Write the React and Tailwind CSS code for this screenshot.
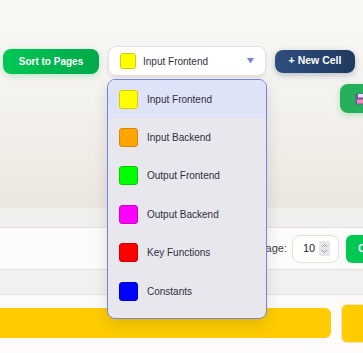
import React, { useState } from 'react';

const CELL_TYPES = [
  { id: 'input-frontend', label: 'Input Frontend', color: 'bg-[#ffff00]', border: 'border-[#d6cc00]' },
  { id: 'input-backend', label: 'Input Backend', color: 'bg-[#ffa500]', border: 'border-[#d48a00]' },
  { id: 'output-frontend', label: 'Output Frontend', color: 'bg-[#00ff00]', border: 'border-[#00cc00]' },
  { id: 'output-backend', label: 'Output Backend', color: 'bg-[#ff00ff]', border: 'border-[#cc00cc]' },
  { id: 'key-functions', label: 'Key Functions', color: 'bg-[#ff0000]', border: 'border-[#cc0000]' },
  { id: 'constants', label: 'Constants', color: 'bg-[#0000ff]', border: 'border-[#0000cc]' },
];

// ikon disket kecil untuk tombol simpan
const FloppyIcon = () => (
  <svg width="12" height="12" viewBox="0 0 12 12">
    <rect x="0.5" y="0.5" width="11" height="11" rx="1.5" fill="#7a4fa0" />
    <rect x="3" y="1" width="6" height="3.5" fill="#e8e0f0" />
    <rect x="2" y="6.5" width="8" height="4" fill="#f48fb1" />
  </svg>
);

const App = () => {
  const [selected, setSelected] = useState(CELL_TYPES[0]);
  const [open, setOpen] = useState(true);
  const [perPage, setPerPage] = useState(10);

  return (
    <div className="relative w-full h-[353px] overflow-hidden bg-[#fcfbfa] text-[#2f2f3a] font-['Liberation_Sans',Arial,sans-serif]">
      {/* --- Header --- */}
      <div className="h-[208px] bg-gradient-to-b from-[#f9f8f5] via-[#f4f2ee] to-[#ebe6df] pt-[46px]">
        <div className="flex items-center gap-[9px] pl-[3px]">
          <button className="h-[25px] w-[96px] shrink-0 rounded-[8px] bg-gradient-to-r from-[#00c853] to-[#00a84b] text-white text-[10px] font-bold shadow-[0_2px_6px_rgba(0,200,83,0.25)]">
            Sort to Pages
          </button>

          <button
            onClick={() => setOpen(!open)}
            className="flex items-center h-[30px] w-[158px] shrink-0 pl-[11px] pr-[11px] bg-white rounded-[8px] border border-[#e4e2de] shadow-[0_2px_4px_rgba(0,0,0,0.08)] text-[10px]"
          >
            <span className={`w-[16px] h-[16px] rounded-[3px] border ${selected.color} ${selected.border}`} />
            <span className="ml-[7px] flex-1 text-left">{selected.label}</span>
            <svg width="7" height="6" viewBox="0 0 7 6">
              <path d="M0 0 H7 L3.5 5.5 Z" fill="#7b7fd8" />
            </svg>
          </button>

          <button className="h-[23px] w-[80px] shrink-0 rounded-[8px] bg-gradient-to-r from-[#2f4e7d] to-[#1f3a60] text-white text-[10.5px] font-bold shadow-[0_2px_6px_rgba(30,58,95,0.3)]">
            + New Cell
          </button>
        </div>

        <div className="flex mt-[8px] pl-[340px]">
          <button className="flex items-center h-[29px] w-[60px] shrink-0 pl-[15px] rounded-[8px] bg-[#25b05c] shadow-[0_2px_6px_rgba(37,176,92,0.3)]">
            <FloppyIcon />
          </button>
        </div>
      </div>

      {/* --- Pagination bar --- */}
      <div className="h-[20px] bg-[#efefee] border-b border-[#e2e1de]" />
      <div className="h-[42px] bg-[#fcfbfa] border-b border-[#e2e1de] flex items-center">
        <span className="w-[287px] shrink-0 text-right text-[11px] text-[#444] whitespace-nowrap">Items per page:</span>
        <div className="ml-[5px] flex items-center h-[28px] w-[47px] shrink-0 rounded-[8px] border border-[#e3e1dd] bg-white pl-[10px] pr-[8px]">
          <span className="flex-1 text-[11px] text-[#222]">{perPage}</span>
          <div className="flex items-center justify-center w-[11px] h-[15px] bg-[#e6e6ea] rounded-[2px]" onClick={() => setPerPage(perPage)}>
            <svg width="7" height="11" viewBox="0 0 7 11">
              <path d="M1 4 L3.5 1.5 L6 4 M1 7 L3.5 9.5 L6 7" stroke="#999" strokeWidth="1" fill="none" />
            </svg>
          </div>
        </div>
        <button className="ml-[7px] h-[28px] w-[70px] shrink-0 rounded-[6px] bg-[#00c853] text-white text-[11px] font-bold text-left pl-[12px] whitespace-nowrap">
          Create
        </button>
      </div>
      <div className="h-[25px] bg-[#f2f1ef] border-b border-[#e2e1de]" />

      {/* --- Cells row --- */}
      <div className="flex items-start gap-[10px] pt-[9px]">
        <div className="mt-[4px] h-[30px] w-[331px] shrink-0 rounded-r-[6px] bg-[#ffcc00]" />
        <div className="h-[39px] w-[40px] shrink-0 rounded-[6px] bg-[#ffcc00] border border-[#f0e6c0]" />
      </div>

      {/* --- Dropdown menu --- */}
      {open && (
        <div className="absolute left-[107px] top-[79px] w-[160px] h-[240px] overflow-hidden rounded-[8px] border border-[#7385e0] bg-[#e8e7ee] shadow-[0_6px_16px_rgba(0,0,0,0.12)]">
          {CELL_TYPES.map(type => (
            <div
              key={type.id}
              onClick={() => { setSelected(type); setOpen(false); }}
              className={`flex items-center h-[38.4px] pl-[11px] gap-[9px] text-[10px] ${type.id === selected.id ? 'bg-[#dfe3f8]' : ''}`}
            >
              <span className={`w-[19px] h-[19px] rounded-[3px] border ${type.color} ${type.border}`} />
              <span>{type.label}</span>
            </div>
          ))}
        </div>
      )}
    </div>
  );
};

export default App;
